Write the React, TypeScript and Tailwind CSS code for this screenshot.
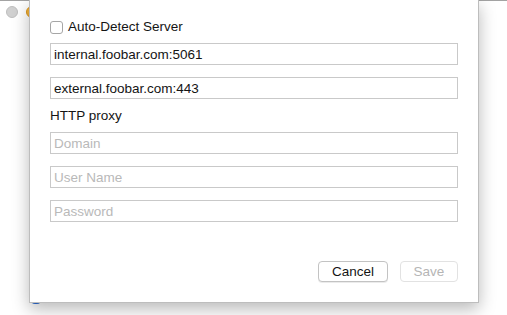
import React from "react";

const fieldClass =
  "h-[22px] w-full border border-[#c9c9c9] bg-white px-[3px] text-[13.5px] text-[#141414] outline-none placeholder:text-[#b9b9b9]";

function Field({ value, placeholder }: { value?: string; placeholder?: string }) {
  return <input className={fieldClass} defaultValue={value} placeholder={placeholder} readOnly />;
}

export default function App() {
  return (
    <div
      className="relative h-[315px] w-[507px] overflow-hidden bg-white"
      style={{ fontFamily: '"Liberation Sans", Arial, sans-serif' }}
    >
      {/* window behind the sheet */}
      <div className="absolute inset-x-0 top-0 h-px bg-[#a3a3a3]" />
      <div className="absolute left-[6px] top-[6px] h-3 w-3 rounded-full border border-[#bebebe] bg-[#d0d0d0]" />
      <div className="absolute left-[26px] top-[6px] h-3 w-3 rounded-full border border-[#d9951d] bg-[#f4b33a]" />
      <div className="absolute left-[31px] top-[296px] h-2 w-[10px] rounded-sm bg-[#2f6fd6]" />

      {/* sheet */}
      <div className="absolute left-[29px] top-0 flex h-[303px] w-[450px] flex-col border-x border-b border-[#bdbdbd] bg-white px-5 pb-5 pt-[19px] shadow-[0_6px_16px_rgba(0,0,0,0.28)]">
        <label className="flex h-4 items-center gap-[5px] text-[13.5px] text-[#141414]">
          <span className="h-[13px] w-[13px] rounded-[3px] border border-[#a6a6a6] bg-white" />
          Auto-Detect Server
        </label>

        <div className="mt-2 flex flex-col gap-3">
          <Field value="internal.foobar.com:5061" />
          <Field value="external.foobar.com:443" />
        </div>

        <div className="mt-[9px] h-4 text-[13.5px] leading-4 text-[#141414]">HTTP proxy</div>

        <div className="mt-2 flex flex-col gap-3">
          <Field placeholder="Domain" />
          <Field placeholder="User Name" />
          <Field placeholder="Password" />
        </div>

        <div className="mt-auto flex justify-end gap-3">
          <button className="h-[21px] w-[70px] rounded-[4px] border border-[#c3c3c3] bg-white text-[13.5px] text-[#141414] shadow-[0_1px_0_rgba(0,0,0,0.08)]">
            Cancel
          </button>
          <button className="h-[21px] w-[58px] rounded-[4px] border border-[#e2e2e2] bg-white text-[13.5px] text-[#b5b5b5]">
            Save
          </button>
        </div>
      </div>
    </div>
  );
}
